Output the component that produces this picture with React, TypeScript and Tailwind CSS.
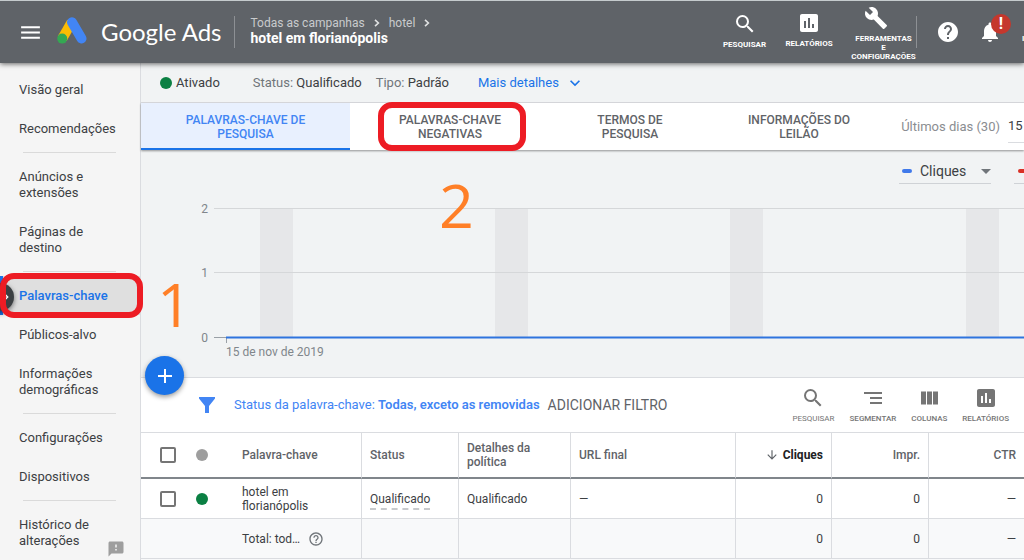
import type { ReactNode } from 'react'
import {
  MdArrowDownward,
  MdBuild,
  MdChevronRight,
  MdExpandMore,
  MdFeedback,
  MdHelp,
  MdHelpOutline,
  MdInsertChart,
  MdMenu,
  MdNotifications,
  MdSearch,
} from 'react-icons/md'

function AdsLogo() {
  return (
    <svg viewBox="0 0 30 27" className="h-[27px] w-[30px]" aria-hidden="true">
      <path d="M14.6 5.2 5.3 21.4" stroke="#fbbc04" strokeWidth="10" />
      <path d="M15 5.3 24.5 21.5" stroke="#4285f4" strokeWidth="10" strokeLinecap="round" />
      <circle cx="5.2" cy="21.6" r="5" fill="#34a853" />
    </svg>
  )
}

function Crumb() {
  return (
    <svg viewBox="0 0 6 8" className="mx-[9px] h-2 w-[6px]" aria-hidden="true">
      <path d="M1 0.8 4.4 4 1 7.2" fill="none" stroke="#e0e1e2" strokeWidth="1.6" />
    </svg>
  )
}

function Header() {
  return (
    <header className="relative z-20 flex h-[63px] shrink-0 overflow-hidden border-t border-[#c5cbcd] bg-[#5f6368] text-white">
      <div className="flex min-w-0 items-center">
        <button aria-label="Menu" className="ml-[18px]">
          <MdMenu size={25} />
        </button>
        <a href="#inicio" className="ml-[14px] flex items-center gap-[14px] pb-1">
          <AdsLogo />
          <span className="pt-1 font-['Lato',sans-serif] text-[24px] leading-8 whitespace-nowrap">Google Ads</span>
        </a>
        <span className="ml-3 h-8 w-px bg-[#8d9094]" />
        <nav aria-label="Campanha" className="ml-4 pb-[2px] whitespace-nowrap">
          <div className="flex items-center text-[12px] leading-[14px] text-[#c9cbcd]">
            <a href="#campanhas">Todas as campanhas</a>
            <Crumb />
            <a href="#hotel">hotel</a>
            <Crumb />
          </div>
          <div className="text-[14px] leading-4 font-bold">hotel em florianópolis</div>
        </nav>
      </div>
      <div className="ml-auto flex shrink-0 text-center text-[8px] leading-[9px] font-bold">
        <button className="flex w-[65px] flex-col items-center gap-1 self-start pt-[11px]">
          <MdSearch size={24} />
          PESQUISAR
        </button>
        <button className="flex w-[64px] flex-col items-center gap-1 self-start pt-[10px]">
          <MdInsertChart size={24} />
          RELATÓRIOS
        </button>
        <button className="ml-[10px] flex w-[65px] flex-col items-center gap-1 self-start pt-[5px]">
          <MdBuild size={24} className="mr-4" />
          <span>
            FERRAMENTAS
            <br />E<br />
            CONFIGURAÇÕES
          </span>
        </button>
        <span className="h-8 w-px self-center bg-[#8d9094]" />
        <button aria-label="Ajuda" className="ml-[19px] self-center">
          <MdHelp size={24} />
        </button>
        <button aria-label="Notificações" className="relative ml-[18px] self-center">
          <MdNotifications size={24} />
          <span className="absolute -top-[6px] left-[13px] size-5 rounded-full bg-[#c5372c] text-[16px] leading-5">!</span>
        </button>
        <span className="ml-5 w-[2px] self-center overflow-hidden pt-3 text-left">I</span>
      </div>
    </header>
  )
}

function NavItem({ children }: { children: ReactNode }) {
  return (
    <a href="#secao" className="block pt-3 pr-6 pb-[11px] pl-[19px]">
      {children}
    </a>
  )
}

function NavDivider() {
  return <hr className="my-1 mr-6 ml-[23px] border-t border-[#dadada]" />
}

function Sidebar() {
  return (
    <aside className="relative w-[141px] shrink-0 border-r border-[#dadce0] bg-[#f5f5f5] pt-[7px] text-[13px] leading-4 text-[#3c4043]">
      <nav aria-label="Seções">
        <NavItem>Visão geral</NavItem>
        <NavItem>Recomendações</NavItem>
        <NavDivider />
        <NavItem>Anúncios e extensões</NavItem>
        <NavItem>Páginas de destino</NavItem>
        <NavDivider />
        <div className="relative">
          <a
            href="#palavras-chave"
            aria-current="page"
            className="block border-l-[3px] border-[#1a73e8] bg-[#dfdfdf] pt-3 pr-6 pb-[11px] pl-4 font-medium text-[#1a73e8]"
          >
            Palavras-chave
          </a>
          <button
            aria-label="Recolher menu"
            className="absolute top-[7px] -left-[14px] flex size-7 items-center justify-end rounded-full bg-[#3c4043] text-white shadow-[0_2px_5px_rgba(0,0,0,0.5)]"
          >
            <MdChevronRight size={16} />
          </button>
          <span className="pointer-events-none absolute -top-[3px] -right-[3px] -bottom-[3px] left-0 z-10 rounded-[14px] border-6 border-[#ed1c24]" />
        </div>
        <NavItem>Públicos-alvo</NavItem>
        <NavItem>Informações demográficas</NavItem>
        <NavDivider />
        <NavItem>Configurações</NavItem>
        <NavItem>Dispositivos</NavItem>
        <NavDivider />
        <NavItem>Histórico de alterações</NavItem>
      </nav>
      <button aria-label="Enviar feedback" className="absolute right-[15px] bottom-[2px] text-[#9e9e9e]">
        <MdFeedback size={18} />
      </button>
    </aside>
  )
}

function StatusBar() {
  return (
    <div className="flex h-10 shrink-0 items-center border-b border-[#dadce0] text-[13px] whitespace-nowrap text-[#3c4043]">
      <span className="ml-[19px] size-3 rounded-full bg-[#0b8043]" />
      <span className="ml-1">Ativado</span>
      <span className="ml-[33px]">
        <span className="text-[#70757a]">Status:</span> Qualificado
      </span>
      <span className="ml-[14px]">
        <span className="text-[#70757a]">Tipo:</span> Padrão
      </span>
      <button className="ml-[29px] flex items-center gap-[6px] text-[#1a73e8]">
        Mais detalhes <MdExpandMore size={20} />
      </button>
    </div>
  )
}

function Tabs() {
  return (
    <div className="relative z-10 flex h-[47px] shrink-0 bg-white text-[12px] leading-[14px] font-medium text-[#5f6368] shadow-[0_1px_2px_rgba(0,0,0,0.4)]">
      <div role="tablist" className="flex">
        <button role="tab" aria-selected="true" className="w-[209px] border-b-2 border-[#1a73e8] bg-[#e8f0fe] px-10 pt-[2px] text-[#4285f4]">
          PALAVRAS-CHAVE DE PESQUISA
        </button>
        <button role="tab" aria-selected="false" className="relative w-[200px] border-b-2 border-transparent px-12 pt-[2px]">
          PALAVRAS-CHAVE NEGATIVAS
          <span className="pointer-events-none absolute -top-px right-6 -bottom-[3px] left-7 rounded-[14px] border-6 border-[#ed1c24]" />
        </button>
        <button role="tab" aria-selected="false" className="w-[160px] border-b-2 border-transparent px-10 pt-[2px]">
          TERMOS DE PESQUISA
        </button>
        <button role="tab" aria-selected="false" className="w-[178px] border-b-2 border-transparent px-8 pt-[2px]">
          INFORMAÇÕES DO LEILÃO
        </button>
      </div>
      <div className="ml-auto flex items-center gap-2 overflow-hidden text-[13px] font-normal whitespace-nowrap">
        <span className="text-[#8a8d91]">Últimos dias (30)</span>
        <button className="w-4 self-stretch text-left text-[#3c4043]">
          <span className="block border-b border-[#dadce0] pt-[8px] pb-[9px]">15</span>
        </button>
      </div>
    </div>
  )
}

const weekendBands = [119, 354, 589, 825]

function Chart() {
  return (
    <section aria-label="Gráfico de cliques" className="relative h-[228px] shrink-0 border-b border-[#dadce0] bg-[#f1f3f4]">
      <div className="flex justify-end gap-[23px] overflow-hidden pt-[9px]">
        <button className="flex h-[25px] w-[92px] items-center border-b border-[#cfd2d6] pl-[3px] text-[14px] text-[#3c4043]">
          <span className="mr-2 h-1 w-[10px] rounded-full bg-[#4079ea]" />
          Cliques
          <svg viewBox="0 0 10 5" className="ml-auto h-[5px] w-[10px]" aria-hidden="true">
            <path d="M0 0h10L5 5z" fill="#70757a" />
          </svg>
        </button>
        <button aria-label="Segunda métrica" className="flex h-[25px] w-[10px] items-center justify-end overflow-hidden border-b border-[#cfd2d6]">
          <span className="h-1 w-[6px] rounded-l-full bg-[#d93025]" />
        </button>
      </div>
      <svg className="h-[180px] w-full" aria-hidden="true">
        {weekendBands.map((x) => (
          <rect key={x} x={x} y="25" width="33" height="129" fill="#e6e7e9" />
        ))}
        <path d="M73 24.5H4000M73 88.5H4000" stroke="#d5d7d9" />
        <path d="M73 153.5H86M85.5 153v6" stroke="#9aa0a6" />
        <path d="M85 153.5H4000" stroke="#2f74de" strokeWidth="2" />
        <g fill="#80868b" className="font-['Roboto',sans-serif] text-[12px]">
          <text x="67" y="29" textAnchor="end">2</text>
          <text x="67" y="93" textAnchor="end">1</text>
          <text x="67" y="158" textAnchor="end">0</text>
          <text x="85" y="172">15 de nov de 2019</text>
        </g>
      </svg>
      <span className="absolute top-[112px] left-4 font-['Open_Sans',sans-serif] text-[61px] leading-[83px] text-[#ff7f27]">1</span>
      <span className="absolute top-[13px] left-[298px] font-['Open_Sans',sans-serif] text-[61px] leading-[83px] text-[#ff7f27]">2</span>
      <button
        aria-label="Adicionar palavra-chave"
        className="absolute -bottom-[18px] left-1 flex size-[39px] items-center justify-center rounded-full bg-[#1a73e8] shadow-[0_2px_5px_rgba(0,0,0,0.4)]"
      >
        <svg viewBox="0 0 14 14" className="size-[14px]" aria-hidden="true">
          <path d="M7 0v14M0 7h14" stroke="#fff" strokeWidth="2" />
        </svg>
      </button>
    </section>
  )
}

function Toolbar() {
  return (
    <div className="flex h-[54px] shrink-0 items-center bg-white text-[13px] whitespace-nowrap">
      <svg viewBox="0 0 16 16" className="ml-[58px] size-4 shrink-0" aria-hidden="true">
        <path d="M0 0h16v1.5L10 9v7H6V9L0 1.5z" fill="#4285f4" />
      </svg>
      <button className="ml-[19px] text-[#4285f4]">
        Status da palavra-chave: <span className="font-semibold">Todas, exceto as removidas</span>
      </button>
      <button className="ml-2 text-[14px] text-[#5f6368]">ADICIONAR FILTRO</button>
      <div className="ml-auto flex gap-[15px] pr-[15px] text-[8px] leading-[10px] text-[#757575]">
        <button className="flex flex-col items-center gap-1">
          <MdSearch size={24} />
          PESQUISAR
        </button>
        <button className="flex flex-col items-center gap-1 font-medium">
          <svg viewBox="0 0 24 24" className="size-6" aria-hidden="true">
            <path d="M3 7h18M9 12h12M9 17h12" stroke="currentColor" strokeWidth="2" />
          </svg>
          SEGMENTAR
        </button>
        <button className="flex flex-col items-center gap-1 font-medium">
          <svg viewBox="0 0 24 24" className="size-6" aria-hidden="true">
            <path d="M4 5.5h5v13H4zM10 5.5h5v13h-5zM16 5.5h5v13h-5z" fill="currentColor" />
          </svg>
          COLUNAS
        </button>
        <button className="flex flex-col items-center gap-1 font-medium">
          <MdInsertChart size={24} />
          RELATÓRIOS
        </button>
      </div>
    </div>
  )
}

const cell = 'border-r border-b border-[#dadce0] px-2 py-0'
const bare = 'border-b border-[#dadce0] p-0'
const head = 'border-t border-r border-b-2 border-t-[#dadce0] border-r-[#dadce0] border-b-[#80868b] px-2 py-0 font-medium'
const headBare = 'border-t border-b-2 border-t-[#dadce0] border-b-[#80868b] p-0'
const box = 'block size-4 appearance-none rounded-[2px] border-2 border-[#757575] bg-white ml-[19px]'

function KeywordTable() {
  return (
    <table className="w-full table-fixed border-separate border-spacing-0 bg-white text-left text-[12px] leading-[14px] text-[#3c4043]">
      <colgroup>
        <col className="w-[50px]" />
        <col className="w-[43px]" />
        <col className="w-[128px]" />
        <col className="w-[97px]" />
        <col className="w-[112px]" />
        <col className="w-[165px]" />
        <col className="w-[96px]" />
        <col className="w-[97px]" />
        <col />
      </colgroup>
      <thead className="text-[#5f6368]">
        <tr className="h-[47px]">
          <th className={headBare}>
            <input type="checkbox" aria-label="Selecionar todas" className={box} />
          </th>
          <th className={headBare}>
            <span className="ml-[5px] block size-3 rounded-full bg-[#9e9e9e]" />
          </th>
          <th className={head}>Palavra-chave</th>
          <th className={head}>Status</th>
          <th className={head}>Detalhes da política</th>
          <th className={head}>URL final</th>
          <th className={head}>
            <span className="flex items-center justify-end gap-1 font-bold text-[#202124]">
              <MdArrowDownward size={14} className="text-[#5f6368]" />
              Cliques
            </span>
          </th>
          <th className={head}>
            <span className="block text-right">Impr.</span>
          </th>
          <th className={headBare}>
            <span className="block pr-2 text-right font-medium">CTR</span>
          </th>
        </tr>
      </thead>
      <tbody>
        <tr className="h-10">
          <td className={bare}>
            <input type="checkbox" aria-label="Selecionar hotel em florianópolis" className={box} />
          </td>
          <td className={bare}>
            <span className="ml-[5px] block size-3 rounded-full bg-[#0b8043]" />
          </td>
          <td className={cell}>hotel em florianópolis</td>
          <td className={cell}>
            <span className="inline-block border-b-2 border-dashed border-[#c8cacd] pt-1 pb-[2px]">Qualificado</span>
          </td>
          <td className={cell}>Qualificado</td>
          <td className={cell}>—</td>
          <td className={`${cell} text-right`}>0</td>
          <td className={`${cell} text-right`}>0</td>
          <td className="border-b border-[#dadce0] px-2 py-0 text-right">—</td>
        </tr>
        <tr className="h-10 bg-[#f8f9fa]">
          <td className={bare} />
          <td className={bare} />
          <td className={cell}>
            <span className="flex items-center gap-2">
              Total: tod…
              <MdHelpOutline size={16} className="text-[#70757a]" />
            </span>
          </td>
          <td className={cell} />
          <td className={cell} />
          <td className={cell} />
          <td className={`${cell} text-right`}>0</td>
          <td className={`${cell} text-right`}>0</td>
          <td className="border-b border-[#dadce0] px-2 py-0 text-right">—</td>
        </tr>
      </tbody>
    </table>
  )
}

export default function App() {
  return (
    <div className="flex min-h-screen flex-col overflow-hidden bg-[#f8f9fa] font-['Roboto',sans-serif]">
      <div className="relative z-20 shadow-[0_1px_5px_rgba(0,0,0,0.6)]">
        <Header />
      </div>
      <div className="flex flex-1">
        <Sidebar />
        <main className="min-w-0 flex-1">
          <div className="bg-[#f1f3f4]">
            <StatusBar />
          </div>
          <Tabs />
          <Chart />
          <Toolbar />
          <KeywordTable />
        </main>
      </div>
    </div>
  )
}
